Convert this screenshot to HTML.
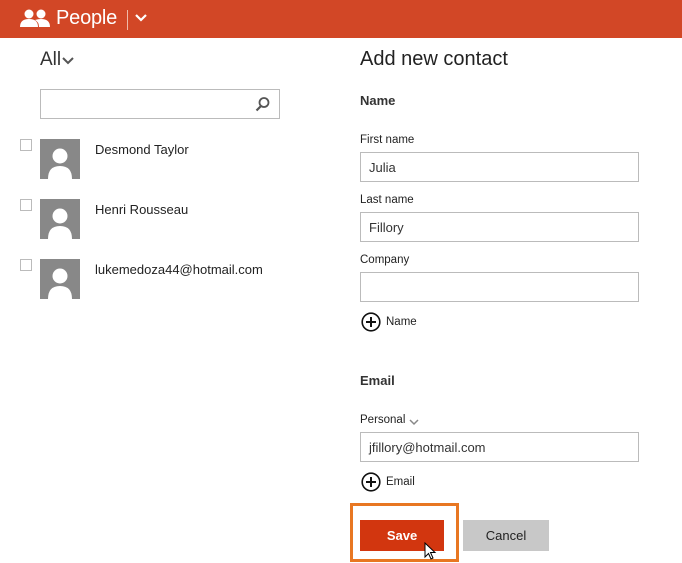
<!DOCTYPE html>
<html><head><style>
*{margin:0;padding:0;box-sizing:border-box}
body{width:682px;height:563px;background:#fff;font-family:"Liberation Sans",sans-serif;color:#222;position:relative;overflow:hidden}
.a{position:absolute}
.hdr{left:0;top:0;width:682px;height:38px;background:#D24726}
.inp{position:absolute;left:360px;width:279px;height:30px;border:1px solid #bbb;font-size:13px;padding:7px 0 0 8px;color:#333}
.lbl{position:absolute;left:360px;font-size:11.5px;color:#222}
.cb{position:absolute;left:20px;width:12px;height:12px;border:1px solid #bbb}
.av{position:absolute;left:40px;width:40px;height:40px;background:#888;overflow:hidden}
.nm{position:absolute;left:95px;font-size:13px;color:#222}
.plus{position:absolute;left:361px;width:20px;height:20px}
</style></head><body>
<div class="a hdr"></div>
<svg class="a" style="left:20px;top:8px" width="30" height="20" viewBox="0 0 30 20"><circle cx="9" cy="6" r="4.5" fill="#fff"/><path d="M0 19 Q0 11 9 11 Q18 11 18 19Z" fill="#fff"/><circle cx="21" cy="6" r="4.5" fill="#fff"/><path d="M15 12 Q18 11 21 11 Q30 11 30 19 L19 19 Q19 14 15 12Z" fill="#fff"/></svg>
<div class="a" style="left:56px;top:7px;font-size:20px;color:#fff;letter-spacing:-0.2px">People</div>
<div class="a" style="left:127px;top:10px;width:1px;height:20px;background:#f0b9a8"></div>
<svg class="a" style="left:135px;top:14px" width="12" height="8"><path d="M1 1 L6 6 L11 1" stroke="#fff" stroke-width="2.2" fill="none"/></svg>
<div class="a" style="left:40px;top:49px;font-size:19px;color:#333">All</div>
<svg class="a" style="left:62px;top:57px" width="12" height="8"><path d="M1 1 L6 6 L11 1" stroke="#555" stroke-width="2" fill="none"/></svg>
<div class="a" style="left:40px;top:89px;width:240px;height:30px;border:1px solid #bbb"></div>
<svg class="a" style="left:255px;top:96px" width="16" height="16"><circle cx="9" cy="6.5" r="4.5" stroke="#555" stroke-width="1.8" fill="none"/><path d="M6 10 L1.5 14.5" stroke="#555" stroke-width="2.2"/></svg>

<div class="cb" style="top:139px"></div><div class="av" style="top:139px"><svg width="40" height="40"><circle cx="20" cy="17" r="7.5" fill="#fff"/><path d="M8 40 Q8 27 20 27 Q32 27 32 40Z" fill="#fff"/></svg></div><div class="nm" style="top:142px">Desmond Taylor</div>
<div class="cb" style="top:199px"></div><div class="av" style="top:199px"><svg width="40" height="40"><circle cx="20" cy="17" r="7.5" fill="#fff"/><path d="M8 40 Q8 27 20 27 Q32 27 32 40Z" fill="#fff"/></svg></div><div class="nm" style="top:202px">Henri Rousseau</div>
<div class="cb" style="top:259px"></div><div class="av" style="top:259px"><svg width="40" height="40"><circle cx="20" cy="17" r="7.5" fill="#fff"/><path d="M8 40 Q8 27 20 27 Q32 27 32 40Z" fill="#fff"/></svg></div><div class="nm" style="top:262px">lukemedoza44@hotmail.com</div>

<div class="a" style="left:360px;top:48px;font-size:20px;color:#222">Add new contact</div>
<div class="a" style="left:360px;top:93px;font-size:13px;font-weight:bold;color:#333">Name</div>
<div class="lbl" style="top:134px">First name</div>
<div class="inp" style="top:152px">Julia</div>
<div class="lbl" style="top:194px">Last name</div>
<div class="inp" style="top:212px">Fillory</div>
<div class="lbl" style="top:254px">Company</div>
<div class="inp" style="top:272px"></div>
<svg class="plus" style="top:312px" viewBox="0 0 20 20"><circle cx="10" cy="10" r="8.8" stroke="#111" stroke-width="1.6" fill="none"/><path d="M10 5 V15 M5 10 H15" stroke="#111" stroke-width="2"/></svg>
<div class="a" style="left:386px;top:316px;font-size:11.5px">Name</div>
<div class="a" style="left:360px;top:373px;font-size:13px;font-weight:bold;color:#333">Email</div>
<div class="lbl" style="top:414px">Personal</div>
<svg class="a" style="left:409px;top:419px" width="10" height="7"><path d="M1 1 L5 5 L9 1" stroke="#888" stroke-width="1.5" fill="none"/></svg>
<div class="inp" style="top:432px">jfillory@hotmail.com</div>
<svg class="plus" style="top:472px" viewBox="0 0 20 20"><circle cx="10" cy="10" r="8.8" stroke="#111" stroke-width="1.6" fill="none"/><path d="M10 5 V15 M5 10 H15" stroke="#111" stroke-width="2"/></svg>
<div class="a" style="left:386px;top:476px;font-size:11.5px">Email</div>

<div class="a" style="left:350px;top:503px;width:109px;height:59px;border:3px solid #E87722"></div>
<div class="a" style="left:360px;top:520px;width:84px;height:31px;background:#D2360F;color:#fff;font-weight:bold;font-size:13px;text-align:center;line-height:31px">Save</div>
<div class="a" style="left:463px;top:520px;width:86px;height:31px;background:#c8c8c8;color:#222;font-size:13px;text-align:center;line-height:31px">Cancel</div>
<svg class="a" style="left:424px;top:542px" width="14" height="20"><path d="M1 1 L1 15 L4.5 11.5 L7 17 L9 16 L6.5 10.5 L11 10.5Z" fill="#fff" stroke="#000" stroke-width="1"/></svg>
</body></html>
